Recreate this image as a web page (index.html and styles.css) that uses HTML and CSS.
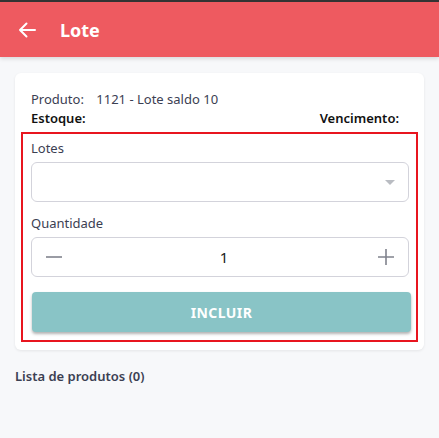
FILE: index.html
```html
<!DOCTYPE html>
<html lang="pt">
  <head>
    <meta charset="UTF-8" />
    <meta name="viewport" content="width=device-width, initial-scale=1.0" />
    <title>Lote</title>
    <link rel="stylesheet" href="styles.css">
  </head>
  <body>
    <div class="topbar">
      <button class="back">
        <svg width="18" height="16" viewBox="0 0 18 16">
          <path d="M17 8H2M8.5 1.5L2 8l6.5 6.5" fill="none" stroke="#fff" stroke-width="2" stroke-linecap="round" stroke-linejoin="round" />
        </svg>
      </button>
      <h1 class="title">Lote</h1>
    </div>

    <div class="page">
      <div class="card">
        <div class="info">
          <div class="row">
            <span class="lbl">Produto:</span>
            <span class="val">1121 - Lote saldo 10</span>
          </div>
          <div class="row split">
            <span class="strong">Estoque:</span>
            <span class="strong">Vencimento:</span>
          </div>
        </div>

        <div class="form">
          <label class="field-label">Lotes</label>
          <div class="select">
            <span class="caret"></span>
          </div>

          <label class="field-label">Quantidade</label>
          <div class="qty">
            <button class="qty-btn">
              <svg width="16" height="16" viewBox="0 0 16 16"><path d="M0 8h16" stroke="#80838d" stroke-width="1.6" /></svg>
            </button>
            <span class="qty-val">1</span>
            <button class="qty-btn">
              <svg width="16" height="16" viewBox="0 0 16 16"><path d="M0 8h16M8 0v16" stroke="#80838d" stroke-width="1.6" /></svg>
            </button>
          </div>

          <button class="add">INCLUIR</button>
        </div>
      </div>

      <div class="list-title">Lista de produtos (0)</div>
    </div>
  </body>
</html>
```

FILE: styles.css
```css
* {
  box-sizing: border-box;
}
body {
  margin: 0;
  background-color: #f7f8fa;
  font-family: "Noto Sans", "Open Sans", sans-serif;
  color: #3b4052;
}
.topbar {
  height: 57px;
  border-top: 2px solid #333;
  background-color: #ee5a60;
  display: flex;
  align-items: center;
  padding-left: 18px;
  box-shadow: 0 2px 4px rgba(0, 0, 0, 0.12);
}
.back {
  background: none;
  border: none;
  padding: 0;
  display: flex;
  margin-right: 24px;
}
.title {
  margin: 0;
  color: #fff;
  font-size: 18px;
  font-weight: 700;
}
.page {
  padding: 16px 15px;
}
.card {
  background-color: #fff;
  border-radius: 6px;
  box-shadow: 0 1px 3px rgba(0, 0, 0, 0.08);
  padding: 17px 6px 8px;
}
.info {
  padding: 0 10px 4px;
  font-size: 13px;
}
.row {
  line-height: 19px;
}
.lbl {
  margin-right: 9px;
}
.split {
  display: flex;
  justify-content: space-between;
  padding-right: 9px;
}
.strong {
  font-weight: 600;
  color: #111;
}
.form {
  border: 2px solid #e8151f;
  padding: 5px 7px 8px 8px;
  display: flex;
  flex-direction: column;
}
.field-label {
  font-size: 13px;
  line-height: 18px;
  margin-bottom: 5px;
}
.select {
  height: 40px;
  border: 1px solid #d3d3db;
  border-radius: 6px;
  margin-bottom: 12px;
  position: relative;
}
.caret {
  position: absolute;
  right: 13px;
  top: 17px;
  border-left: 5px solid transparent;
  border-right: 5px solid transparent;
  border-top: 5px solid #b9bcc2;
}
.qty {
  height: 40px;
  border: 1px solid #d3d3db;
  border-radius: 6px;
  display: flex;
  align-items: center;
  justify-content: space-between;
  padding: 0 14px;
  margin-bottom: 15px;
}
.qty-btn {
  background: none;
  border: none;
  padding: 0;
  display: flex;
}
.qty-val {
  font-size: 15px;
  color: #222;
  margin-left: 8px;
}
.add {
  height: 40px;
  margin-left: 1px;
  margin-right: -2px;
  border: none;
  border-radius: 4px;
  background-color: #89c4c6;
  color: #fff;
  font-family: inherit;
  font-size: 14px;
  font-weight: 700;
  letter-spacing: 0.4px;
  box-shadow: 0 2px 3px rgba(0, 0, 0, 0.3);
}
.list-title {
  margin-top: 17px;
  font-size: 13px;
  font-weight: 600;
}
```
